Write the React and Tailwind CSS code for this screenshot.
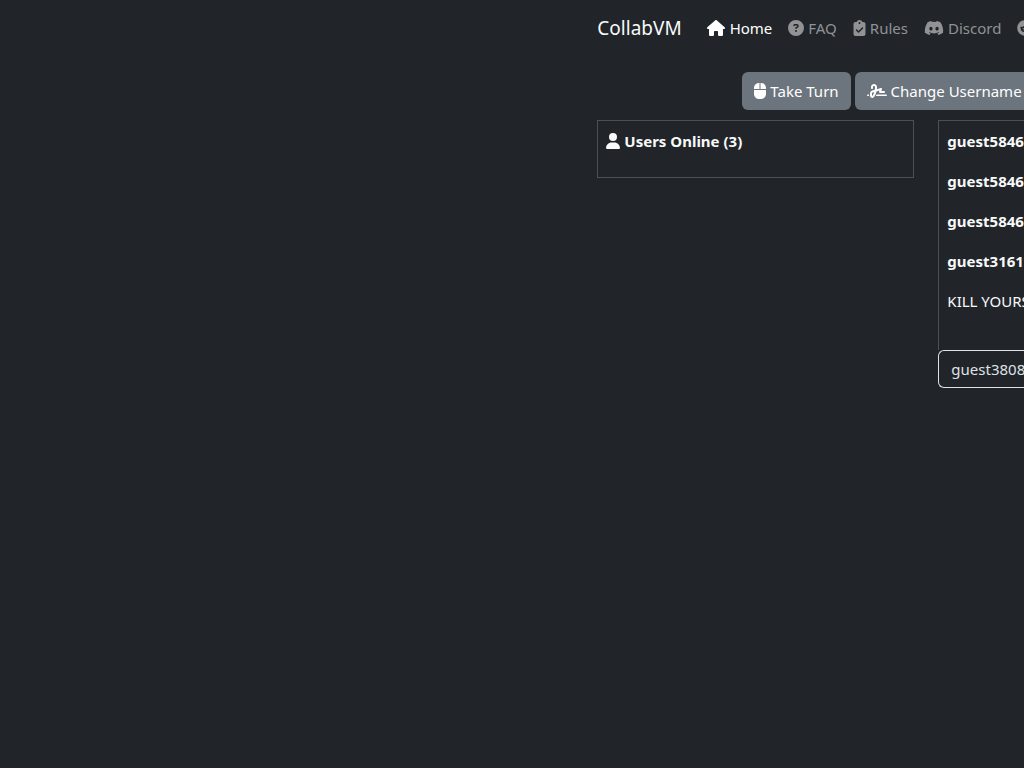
import React from 'react';
import { FaReddit } from 'react-icons/fa';
import {
    FaHouse,
    FaCircleQuestion,
    FaClipboardCheck,
    FaDiscord,
    FaComputerMouse,
    FaSignature,
    FaUser,
} from 'react-icons/fa6';

const links = [
    { label: 'Home', icon: FaHouse, width: 'w-5', active: true },
    { label: 'FAQ', icon: FaCircleQuestion, width: 'w-4' },
    { label: 'Rules', icon: FaClipboardCheck, width: 'w-[13px]' },
    { label: 'Discord', icon: FaDiscord, width: 'w-5' },
];

const messages = [
    { id: 1, user: 'guest5846' },
    { id: 2, user: 'guest5846' },
    { id: 3, user: 'guest5846' },
    { id: 4, user: 'guest3161' },
    { id: 5, text: 'KILL YOURS' },
];

const Navbar = () => (
    <nav className="flex h-14 items-center whitespace-nowrap">
        <a href="#" className="mr-6 shrink-0 text-[19px] text-[#f8f9fa]">CollabVM</a>
        <ul className="flex shrink-0 items-center gap-4">
            {links.map(({ label, icon: Icon, width, active }) => (
                <li key={label}>
                    <a
                        href="#"
                        className={`flex items-center gap-1 ${active ? 'text-white' : 'text-[#909294]'}`}
                    >
                        <Icon className={`h-4 ${width}`} /> {label}
                    </a>
                </li>
            ))}
            <li>
                <a href="#" aria-label="Reddit" className="block text-[#909294]">
                    <FaReddit className="size-4" />
                </a>
            </li>
        </ul>
    </nav>
);

const ActionButton = ({ icon: Icon, width, children }) => (
    <button
        type="button"
        className="flex h-[38px] shrink-0 items-center gap-1 rounded-md bg-[#6c757d] px-3 text-white"
    >
        <Icon className={`h-4 ${width}`} /> {children}
    </button>
);

const App = () => (
    <div className="min-h-screen overflow-hidden bg-[#212529] font-['Noto_Sans','Open_Sans',sans-serif] text-[15px] leading-6 text-[#f8f9fa]">
        <div className="ml-auto w-5/12">
            <Navbar />

            <div className="mt-4 flex gap-1 pl-[145px] whitespace-nowrap">
                <ActionButton icon={FaComputerMouse} width="w-3">Take Turn</ActionButton>
                <ActionButton icon={FaSignature} width="w-5">Change Username</ActionButton>
            </div>

            <main className="mt-[10px] flex items-start gap-6">
                <section className="h-[58px] w-[317px] shrink-0 border border-[#495057] p-2">
                    <h2 className="flex items-center gap-1 font-bold">
                        <FaUser className="h-4 w-[14px]" /> Users Online (3)
                    </h2>
                </section>

                <section className="min-w-0 flex-1 whitespace-nowrap">
                    <div className="h-[230px] space-y-4 overflow-hidden border-t border-l border-[#495057] p-2">
                        {messages.map(({ id, user, text }) => (
                            <p key={id}>
                                {user && <b>{user}</b>}
                                {text}
                            </p>
                        ))}
                    </div>
                    <label className="flex h-[38px] items-center rounded-l-md border border-r-0 border-[#dee2e6] pl-3 text-[#dee2e6]">
                        <span>guest3808</span>
                        <input type="text" className="w-0 min-w-0 flex-1 bg-transparent outline-none" />
                    </label>
                </section>
            </main>
        </div>
    </div>
);

export default App;
